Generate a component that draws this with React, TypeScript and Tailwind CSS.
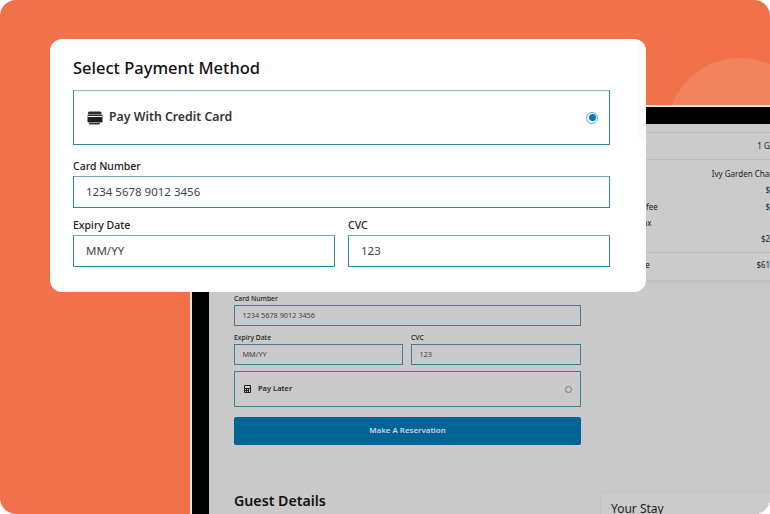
import React from 'react';
import { FaCalculator } from 'react-icons/fa';

const CardsIcon = () => (
  <svg width="16" height="14" viewBox="0 0 16 14" className="shrink-0">
    <path d="M2.5 0.5h10.5a1.5 1.5 0 0 1 1.5 1.5v1H1V2a1.5 1.5 0 0 1 1.5-1.5z" fill="#2b2b2b" />
    <rect x="0.5" y="3.5" width="15" height="8" rx="1.2" fill="#1f1f1f" />
    <rect x="0.5" y="5" width="15" height="1" fill="#ffffff" />
    <rect x="2" y="12" width="11" height="1.4" rx="0.7" fill="#3a3a3a" />
  </svg>
);

const SummaryRow = ({ label, value, className = '' }: { label: string; value: string; className?: string }) => (
  <div className={`flex justify-between items-center ${className}`}>
    <span>{label}</span>
    <span>{value}</span>
  </div>
);

const ModalField = ({ label, value, className = '' }: { label: string; value: string; className?: string }) => (
  <div className={`flex flex-col ${className}`}>
    <label className="text-[10.5px] leading-[16px] font-medium text-[#222] mb-[2px]">{label}</label>
    <div className="h-[32px] border border-[#2f83a5] border-t-[#6fa8bf] flex items-center pl-[12px] text-[11.5px] text-[#444]">
      {value}
    </div>
  </div>
);

const BackField = ({ label, value, className = '' }: { label: string; value: string; className?: string }) => (
  <div className={`flex flex-col ${className}`}>
    <label className="text-[6.8px] leading-[10px] font-medium text-[#1c1c1c] mb-[1px]">{label}</label>
    <div className="h-[21px] border border-[#3f7c96] flex items-center pl-[7.5px] text-[7.3px] text-[#444]">
      {value}
    </div>
  </div>
);

export default function App() {
  return (
    <div className="relative w-[770px] h-[514px] overflow-hidden rounded-[16px] bg-[#f1714a] font-['Noto_Sans',sans-serif]">
      {/* decorative circle */}
      <div className="absolute left-[667px] top-[58px] w-[146px] h-[146px] rounded-full bg-[#f3825e]" />

      {/* site screenshot behind the modal */}
      <div className="absolute left-[190px] top-[105px] w-[640px] h-[420px] bg-[#f6e3da] pl-[2px] pt-[2px]">
        <div className="h-full flex flex-col bg-[#c9c9c9]">
          <div className="h-[17px] bg-black shrink-0" />
          <div className="flex flex-1">
            <div className="w-[17px] bg-black shrink-0" />
            <div className="flex-1 flex pl-[25px] gap-[19px]">
              <div className="w-[347px] flex flex-col pt-[170px]">
                <BackField label="Card Number" value="1234 5678 9012 3456" />
                <div className="flex gap-[8px] mt-[7px]">
                  <BackField label="Expiry Date" value="MM/YY" className="w-[169px]" />
                  <BackField label="CVC" value="123" className="flex-1" />
                </div>
                <div className="h-[36px] mt-[6px] border border-[#3f7c96] flex items-center justify-between pl-[9px] pr-[8px]">
                  <div className="flex items-center gap-[7px] text-[7.5px] font-semibold text-[#2a2a2a]">
                    <FaCalculator className="w-[7px] h-[8px] text-[#222]" />
                    <span>Pay Later</span>
                  </div>
                  <span className="w-[7px] h-[7px] rounded-full border border-[#777]" />
                </div>
                <div className="h-[28px] mt-[10px] rounded-[2px] bg-[#016496] flex items-center justify-center text-[7.9px] font-semibold text-[#c9d8e2]">
                  Make A Reservation
                </div>
                <h2 className="mt-[45px] text-[14.2px] leading-[22px] font-semibold text-[#111]">Guest Details</h2>
              </div>

              <div className="w-[197px] flex flex-col justify-between">
                <div className="h-[156px] bg-[#cbcbcb] shadow-[0_2px_4px_rgba(0,0,0,0.05)] text-[8px] text-[#222] px-[11px]">
                  <div className="h-[9px] border-b border-[#bdbdbd]" />
                  <SummaryRow label="Guests" value="1 Guest" className="h-[27px] border-b border-[#bdbdbd]" />
                  <div className="flex flex-col pt-[6px] pb-[5px] border-b border-[#bdbdbd]">
                    <SummaryRow label="Hotel" value="Ivy Garden Chateau" className="h-[16px]" />
                    <SummaryRow label="Room" value="$5.00" className="h-[16px]" />
                    <SummaryRow label="Cleaning fee" value="$5.00" className="h-[17px]" />
                    <span className="h-[16px] leading-[16px]">Service tax</span>
                    <SummaryRow label="Tax" value="$29.00" className="h-[16px]" />
                  </div>
                  <SummaryRow label="Total Price" value="$613.00" className="h-[24px]" />
                </div>
                <div className="h-[30px] mb-[3px] bg-[#cbcbcb] border-l border-t border-[#c4c4c4] pl-[10px] pt-[8px] text-[12px] leading-[16px] text-[#222]">
                  Your Stay
                </div>
              </div>
            </div>
          </div>
        </div>
      </div>

      {/* payment modal */}
      <div className="absolute left-[50px] top-[39px] w-[596px] h-[253px] rounded-[12px] bg-white px-[23px] pt-[16px] overflow-hidden">
        <h1 className="text-[16.5px] leading-[26px] font-medium text-[#111] mb-[9px]">Select Payment Method</h1>
        <div className="w-[537px] flex flex-col">
          <div className="h-[55px] border border-[#2f83a5] border-t-[#8dbbce] flex items-center justify-between pl-[13px] pr-[11px]">
            <div className="flex items-center gap-[6px]">
              <CardsIcon />
              <span className="text-[12.3px] font-semibold text-[#333]">Pay With Credit Card</span>
            </div>
            <span className="w-[12px] h-[12px] rounded-full border border-[#5aa5d0] p-[1.5px]">
              <span className="block w-full h-full rounded-full bg-[#0c75b5]" />
            </span>
          </div>
          <ModalField label="Card Number" value="1234 5678 9012 3456" className="mt-[13px]" />
          <div className="flex gap-[13px] mt-[9px]">
            <ModalField label="Expiry Date" value="MM/YY" className="w-[262px]" />
            <ModalField label="CVC" value="123" className="flex-1" />
          </div>
        </div>
        {/* faint scrollbar track */}
        <div className="absolute right-0 top-0 w-[8px] h-[100px] bg-[#fbfbfb]" />
      </div>
    </div>
  );
}
